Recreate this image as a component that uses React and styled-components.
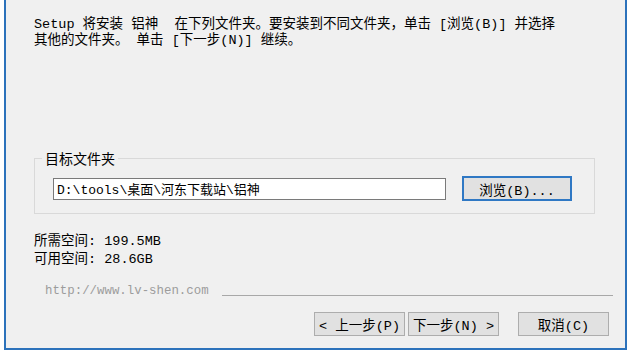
import React from 'react';
import styled, { createGlobalStyle } from 'styled-components';

const GlobalStyle = createGlobalStyle`
    html, body {
        margin: 0;
        padding: 0;
        background: #ffffff;
    }
    body {
        width: 630px;
        height: 354px;
        overflow: hidden;
        font-family: "Liberation Mono", "Noto Sans CJK SC", monospace;
        font-size: 14px;
        color: #000;
    }
    * {
        box-sizing: border-box;
    }
`;

const Window = styled.div`
    margin-left: 4px;
    width: 623px;
    height: 350px;
    background: #f0f0f0;
    border-left: 2px solid #2c72bb;
    border-right: 2px solid #2c72bb;
    border-bottom: 2px solid #2c72bb;
    display: flex;
    flex-direction: column;
`;

const Intro = styled.div`
    margin: 17px 0 0 28px;
    font-size: 13.5px;
`;

const Line = styled.div`
    height: ${p => p.$h || 16}px;
    line-height: ${p => p.$h || 16}px;
    white-space: pre;
`;

const GroupBox = styled.fieldset`
    margin: 101px 0 0 28px;
    width: 561px;
    padding: 10px 0 12px 0;
    border: 1px solid #d9d9d9;
    display: flex;
    align-items: center;
    gap: 16px;
`;

const Legend = styled.legend`
    margin-left: 7px;
    padding: 0 3px;
    font-family: "Noto Sans CJK SC", sans-serif;
    font-size: 14px;
    line-height: 16px;
`;

const PathInput = styled.div`
    margin-left: 18px;
    width: 393px;
    height: 22px;
    background: #fff;
    border: 1px solid #7a7a7a;
    display: flex;
    align-items: center;
    padding-left: 3px;
    font-size: 13px;
    white-space: nowrap;
`;

const Button = styled.div`
    width: ${p => p.$w}px;
    height: ${p => p.$h || 24}px;
    background: #e1e1e1;
    border: ${p => (p.$focus ? '2px solid #2f78c4' : '1px solid #adadad')};
    display: flex;
    align-items: center;
    justify-content: center;
    font-size: 13.5px;
    white-space: pre;
`;

const SpaceInfo = styled.div`
    margin: 19px 0 0 28px;
    font-size: 13.5px;
`;

const Brand = styled.div`
    margin: 14px 12px 0 39px;
    height: 16px;
    display: flex;
    align-items: center;
    gap: 13px;
    color: #9c9c9c;
    font-size: 12.4px;
    white-space: nowrap;
`;

const Rule = styled.div`
    flex: 1;
    height: 1px;
    margin-top: 8px;
    background: #a8a8a8;
`;

const Footer = styled.div`
    margin: 13px 16px 0 0;
    display: flex;
    justify-content: flex-end;
    gap: 3px;
`;

const Gap = styled.div`
    width: 13px;
`;

export default function App() {
    return (
        <>
            <GlobalStyle />
            <Window>
                <Intro>
                    <Line>Setup 将安装 铝神  在下列文件夹。要安装到不同文件夹，单击 [浏览(B)] 并选择</Line>
                    <Line>其他的文件夹。 单击 [下一步(N)] 继续。</Line>
                </Intro>
                <GroupBox>
                    <Legend>目标文件夹</Legend>
                    <PathInput>D:\tools\桌面\河东下载站\铝神</PathInput>
                    <Button $w={110} $h={25} $focus>浏览(B)...</Button>
                </GroupBox>
                <SpaceInfo>
                    <Line $h={18}>所需空间: 199.5MB</Line>
                    <Line $h={18}>可用空间: 28.6GB</Line>
                </SpaceInfo>
                <Brand>
                    http://www.lv-shen.com
                    <Rule />
                </Brand>
                <Footer>
                    <Button $w={91}>&lt; 上一步(P)</Button>
                    <Button $w={91}>下一步(N) &gt;</Button>
                    <Gap />
                    <Button $w={91}>取消(C)</Button>
                </Footer>
            </Window>
        </>
    );
}
